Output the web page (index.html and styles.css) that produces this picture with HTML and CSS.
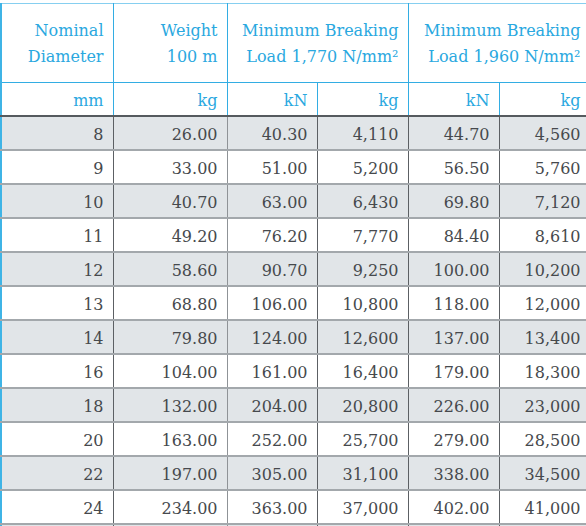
FILE: index.html
```html
<!DOCTYPE html>
<html>
<head>
    <title>Wire Rope Breaking Loads</title>
    <link rel="stylesheet" href="styles.css">
</head>
<body>

    <div class="wrap">
        <table class="rope-table">
            <colgroup>
                <col class="c-dia">
                <col class="c-weight">
                <col class="c-load-first">
                <col class="c-load">
                <col class="c-load">
                <col class="c-load">
            </colgroup>
            <thead>
                <tr class="head-main">
                    <th>Nominal<br>Diameter</th>
                    <th>Weight<br>100 m</th>
                    <th colspan="2">Minimum Breaking<br>Load 1,770 N/mm²</th>
                    <th colspan="2">Minimum Breaking<br>Load 1,960 N/mm²</th>
                </tr>
                <tr class="head-units">
                    <th>mm</th>
                    <th>kg</th>
                    <th>kN</th>
                    <th>kg</th>
                    <th>kN</th>
                    <th>kg</th>
                </tr>
            </thead>
            <tbody>
                <tr><td>8</td><td>26.00</td><td>40.30</td><td>4,110</td><td>44.70</td><td>4,560</td></tr>
                <tr><td>9</td><td>33.00</td><td>51.00</td><td>5,200</td><td>56.50</td><td>5,760</td></tr>
                <tr><td>10</td><td>40.70</td><td>63.00</td><td>6,430</td><td>69.80</td><td>7,120</td></tr>
                <tr><td>11</td><td>49.20</td><td>76.20</td><td>7,770</td><td>84.40</td><td>8,610</td></tr>
                <tr><td>12</td><td>58.60</td><td>90.70</td><td>9,250</td><td>100.00</td><td>10,200</td></tr>
                <tr><td>13</td><td>68.80</td><td>106.00</td><td>10,800</td><td>118.00</td><td>12,000</td></tr>
                <tr><td>14</td><td>79.80</td><td>124.00</td><td>12,600</td><td>137.00</td><td>13,400</td></tr>
                <tr><td>16</td><td>104.00</td><td>161.00</td><td>16,400</td><td>179.00</td><td>18,300</td></tr>
                <tr><td>18</td><td>132.00</td><td>204.00</td><td>20,800</td><td>226.00</td><td>23,000</td></tr>
                <tr><td>20</td><td>163.00</td><td>252.00</td><td>25,700</td><td>279.00</td><td>28,500</td></tr>
                <tr><td>22</td><td>197.00</td><td>305.00</td><td>31,100</td><td>338.00</td><td>34,500</td></tr>
                <tr><td>24</td><td>234.00</td><td>363.00</td><td>37,000</td><td>402.00</td><td>41,000</td></tr>
                <tr class="row-next"><td></td><td></td><td></td><td></td><td></td><td></td></tr>
            </tbody>
        </table>
    </div>

</body>
</html>
```

FILE: styles.css
```css
body {
    margin: 0;
    background-color: white;
    font-family: "DejaVu Serif", Georgia, serif;
    overflow: hidden;
}

.wrap {
    padding-top: 3px;
    width: 600px;
}

.rope-table {
    border-collapse: collapse;
    table-layout: fixed;
    width: 590px;
    border-left: 2px solid #3fb4e6;
}

.c-dia {
    width: 112px;
}

.c-weight {
    width: 114px;
}

.c-load-first {
    width: 90px;
}

.c-load {
    width: 91px;
}

th, td {
    text-align: right;
    padding: 0 9px 0 0;
    white-space: nowrap;
}

th {
    color: #2aa8e0;
    font-weight: normal;
    font-size: 16px;
    border: 1px solid #33ade3;
}

.head-main th {
    height: 76px;
    line-height: 26px;
    padding-top: 2px;
    border-top-color: #86cff0;
}

.head-units th {
    height: 30px;
    padding-top: 2px;
    border-bottom: 2px solid #555a5e;
}

td {
    color: #46494d;
    font-size: 16px;
    height: 29px;
    padding-top: 3px;
    border-bottom: 2px solid #a3a8ac;
    border-right: 1px solid #5c6064;
}

td:nth-child(2) {
    border-right-color: #8f9397;
}

tbody tr:nth-child(odd) td {
    background-color: #e1e5e8;
}
```
